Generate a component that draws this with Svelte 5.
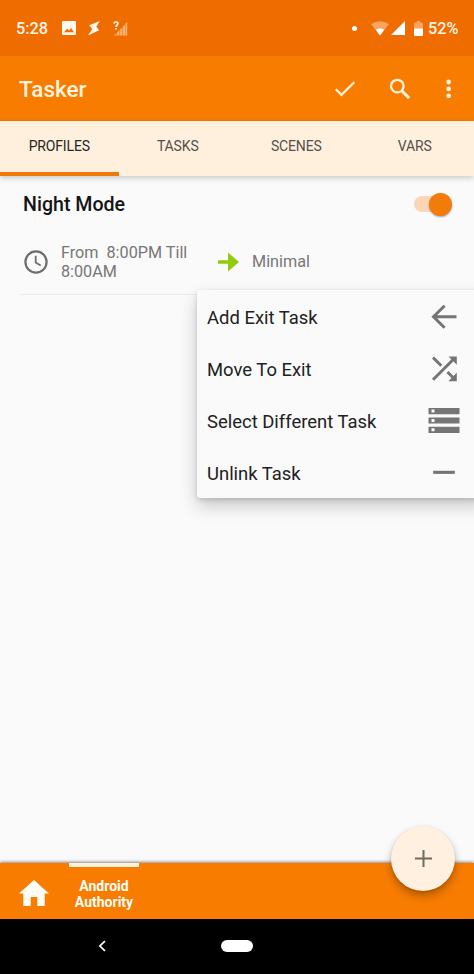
<script>
  const tabs = ['PROFILES', 'TASKS', 'SCENES', 'VARS'];
  const actions = [
    { label: 'Add Exit Task', icon: 'back' },
    { label: 'Move To Exit', icon: 'shuffle' },
    { label: 'Select Different Task', icon: 'storage' },
    { label: 'Unlink Task', icon: 'minus' }
  ];
  let active = $state(0);
  let enabled = $state(true);
</script>

<div class="screen">
  <header class="status">
    <span class="clock">5:28</span>
    <svg class="image" width="14" height="14" viewBox="0 0 14 14"><path fill="#fff8ec" fill-rule="evenodd" d="M1.200 0h11.600Q14 0 14 1.200v11.600q0 1.200-1.200 1.200H1.200Q0 14 0 12.800V1.200Q0 0 1.200 0ZM2 11.200h10L9.100 7 7.200 9.500 5.100 7.800Z" /></svg>
    <svg class="bolt" width="13" height="15" viewBox="0 0 13 15"><path fill="#fff8ec" d="M11.800 0 1.200 4.300 4.300 8.100 0 14.500 11.200 9.200 8.300 5.700Z" /></svg>
    <svg class="unknown" width="15" height="15" viewBox="0 0 15 15">
      <g fill="#fbb273"><path d="M1 14.500 3.500 12v2.500ZM4 11.500 6.600 9v5.500H4ZM7.100 8.500 9.400 6.300v8.200H7.100ZM9.900 5.500 12.100 3.500v11H9.900ZM12.500 2.800 14.200 1v13.500h-1.700Z" /></g>
      <path d="M.900 2.700Q1.100 1 3 1t1.900 1.600C4.900 4 3 4.200 3 5.900M3 7v1.600" fill="none" stroke="#fff8ec" stroke-width="1.600" />
    </svg>
    <i class="dot"></i>
    <svg class="wifi" width="18" height="15" viewBox="0 0 18 15"><path fill="#f9a45f" d="M0 3.100Q9-2.800 18 3.100L9 14.500Z" /><path fill="#fff" d="M4.700 8.800Q9 6 13.300 8.800L9 14.500Z" /></svg>
    <svg class="cell" width="14" height="14" viewBox="0 0 14 14"><path fill="#fff" d="M14 0v14H0Z" /></svg>
    <svg class="battery" width="9" height="15" viewBox="0 0 9 15"><path fill="#f9a45f" d="M2.700 0h3.600v1.500H8q1 0 1 1V8H0V2.500q0-1 1-1h1.700Z" /><path fill="#fff" d="M0 7.500h9V14q0 1-1 1H1q-1 0-1-1Z" /></svg>
    <span class="percent">52%</span>
  </header>

  <div class="appbar">
    <h1>Tasker</h1>
    <svg class="check" width="22" height="18" viewBox="0 0 22 18"><path d="m1.800 9.200 5.700 5.700L20.200 2.200" fill="none" stroke="#fff3df" stroke-width="2.300" /></svg>
    <svg class="search" width="22" height="22" viewBox="0 0 22 22"><g fill="none" stroke="#fff3df"><circle cx="8.300" cy="8.100" r="6.300" stroke-width="2.300" /><path d="m12.800 12.800 7.300 7.300" stroke-width="2.900" /></g></svg>
    <svg class="more" width="6" height="20" viewBox="0 0 6 20"><g fill="#fff3df"><circle cx="2.600" cy="3" r="2.400" /><circle cx="2.600" cy="9.900" r="2.400" /><circle cx="2.600" cy="16.800" r="2.400" /></g></svg>
  </div>

  <nav class="tabs">
    {#each tabs as tab, i}
      <button class:active={active === i} onclick={() => (active = i)}>{tab}</button>
    {/each}
  </nav>

  <main>
    <section class="profile">
      <div class="heading">
        <h2>Night Mode</h2>
        <button class="switch" class:off={!enabled} aria-label="Night Mode" onclick={() => (enabled = !enabled)}><i></i></button>
      </div>
      <div class="rule">
        <svg class="time" width="24" height="24" viewBox="0 0 24 24"><g fill="none" stroke="#6d6d6d"><circle cx="12" cy="12" r="10.600" stroke-width="2.200" /><path d="M11.700 5.800v6.700l5 3" stroke-width="1.800" /></g></svg>
        <p>From&nbsp; 8:00PM Till<br />8:00AM</p>
        <svg class="link" width="21" height="20" viewBox="0 0 21 20"><path fill="#93c90e" d="M0 8.300h10V.500L21 10 10 19.500v-7.800H0Z" /></svg>
        <span>Minimal</span>
      </div>
    </section>

    <div class="menu">
      {#each actions as action}
        <button>
          <span>{action.label}</span>
          <svg width="32" height="32" viewBox="0 0 32 32">
            {#if action.icon === 'back'}
              <path d="M28.500 15.700H6M16.600 4.700 5.500 15.700l11.100 11" fill="none" stroke="#757575" stroke-width="3" />
            {:else if action.icon === 'shuffle'}
              <g fill="none" stroke="#757575" stroke-width="3"><path d="m5 4.500 8.300 8.300M5 26.800 26 5.800M19.500 19l6 6" /></g>
              <path fill="#757575" d="M20.500 3.500h8.300v8.300ZM28.800 19.500v8.700h-8.300Z" />
            {:else if action.icon === 'storage'}
              <path fill="#757575" fill-rule="evenodd" d="M.500 3h31V9.300H.500ZM3.500 4.600v3h3v-3ZM.500 12.400h31v6.200H.500ZM3.500 14v3h3v-3ZM.500 21.700h31v6.200H.500ZM3.500 23.300v3h3v-3Z" />
            {:else}
              <path fill="#757575" d="M5.200 13.800h21.600v3.100H5.200Z" />
            {/if}
          </svg>
        </button>
      {/each}
    </div>
  </main>

  <footer>
    <svg class="home" width="30" height="26" viewBox="0 0 30 26"><path fill="#fffdf5" d="M15 0 30 13.400h-4.300V26h-7.400v-9h-6.600v9H4.300V13.400H0Z" /></svg>
    <div class="project">Android<br />Authority</div>
    <button class="fab" aria-label="Add"><svg width="17" height="17" viewBox="0 0 17 17"><path d="M8.500 0v17M0 8.500h17" stroke="#6e6b61" stroke-width="2" /></svg></button>
  </footer>

  <div class="system">
    <svg class="chevron" width="8" height="12" viewBox="0 0 8 12"><path d="M6.900 1.200 1.900 6l5 4.800" fill="none" stroke="#fff" stroke-width="1.700" /></svg>
    <i class="pill"></i>
  </div>
</div>

<style>
  :global(body) { margin: 0; }
  .screen { width: 474px; height: 974px; display: flex; flex-direction: column; overflow: hidden; background: #fafafa; font-family: Roboto, sans-serif; }
  * { box-sizing: border-box; }
  button { border: 0; padding: 0; background: none; font: inherit; color: inherit; }
  svg { display: block; flex: none; }
  .status { height: 56px; flex: none; display: flex; align-items: center; padding-left: 16px; background: #ef6c00; color: #fff5e5; font-size: 16.300px; font-weight: 500; white-space: nowrap; }
  .clock { width: 46px; }
  .bolt { margin-left: 12px; }
  .unknown { margin-left: 12px; }
  .dot { width: 5px; height: 5px; margin-left: 224px; border-radius: 50%; background: #fff; }
  .wifi { margin-left: 14px; }
  .cell { margin-left: 2px; }
  .battery { margin-left: 9px; }
  .percent { margin-left: 5px; }
  .appbar { height: 65px; flex: none; display: flex; align-items: center; padding-left: 19px; background: #f77c00; color: #fff3df; }
  h1 { width: 315px; margin: 1px 0 0; font-size: 22.500px; line-height: 28px; font-weight: 500; }
  .check { margin-top: 1px; }
  .search { margin-left: 33px; margin-top: 1px; }
  .more { margin-left: 35px; }
  .tabs { position: relative; z-index: 1; height: 55px; flex: none; display: flex; background: #fff0de; box-shadow: 0 2px 6px #0003; }
  .tabs button { flex: 1; padding-bottom: 1px; border-bottom: 4px solid transparent; font-size: 14px; letter-spacing: -.15px; color: #55504a; }
  .tabs .active { color: #29251f; border-color: #ee7a0a; }
  main { position: relative; height: 687px; flex: none; }
  .profile { margin-left: 19px; height: 119px; border-bottom: 1px solid #ececec; }
  .heading { height: 56px; display: flex; align-items: center; justify-content: space-between; padding: 0 21px 0 4px; }
  h2 { margin: 2px 0 0; font-size: 19.600px; line-height: 24px; font-weight: 500; color: #151515; }
  .switch { width: 39px; height: 24px; display: flex; align-items: center; justify-content: flex-end; }
  .switch::before { content: ''; flex: none; width: 32px; height: 16px; margin-right: -17px; border-radius: 8px; background: #fad6b5; }
  .switch i { position: relative; flex: none; width: 23px; height: 23px; border-radius: 50%; margin-right: 1px; background: #f27b09; box-shadow: 0 1px 2px #0005; }
  .switch.off i { right: 15px; }
  .rule { height: 60px; display: flex; align-items: center; padding-left: 5px; color: #777; font-size: 16.200px; line-height: 19px; }
  p { width: 157px; margin: 0 0 1px 13px; white-space: nowrap; }
  .rule span { margin: 0 0 1px 13px; }
  .menu { position: absolute; left: 197px; top: 114px; width: 290px; height: 208px; border-radius: 3px; background: #fafafa; box-shadow: 0 8px 18px #0003, 0 2px 5px #0002; }
  .menu button { width: 277px; height: 52px; display: flex; align-items: center; justify-content: space-between; padding: 1px 14px 0 10px; font-size: 18.450px; color: #212121; }
  .menu span { margin-top: 3px; }
  footer { position: relative; height: 56px; flex: none; display: flex; align-items: flex-start; padding-left: 19px; background: #f77c00; box-shadow: 0 -1px 3px #0007; }
  .home { margin-top: 17px; }
  .project { width: 70px; height: 56px; margin-left: 20px; padding-top: 11px; border-top: 4px solid #fff0dc; color: #fffdf5; text-align: center; font-size: 14px; line-height: 16px; font-weight: 700; }
  .fab { position: absolute; right: 19px; top: -37px; width: 64px; height: 65px; display: grid; place-items: center; border-radius: 50%; background: #fff0df; box-shadow: 0 5px 9px #0004, 0 1px 3px #0002; }
  .system { height: 55px; flex: none; display: flex; align-items: center; padding-left: 98px; background: #000; }
  .chevron { margin-bottom: 1px; }
  .pill { width: 32px; height: 12px; margin-left: 115px; margin-bottom: 1px; border-radius: 6px; background: #fff; }
</style>
